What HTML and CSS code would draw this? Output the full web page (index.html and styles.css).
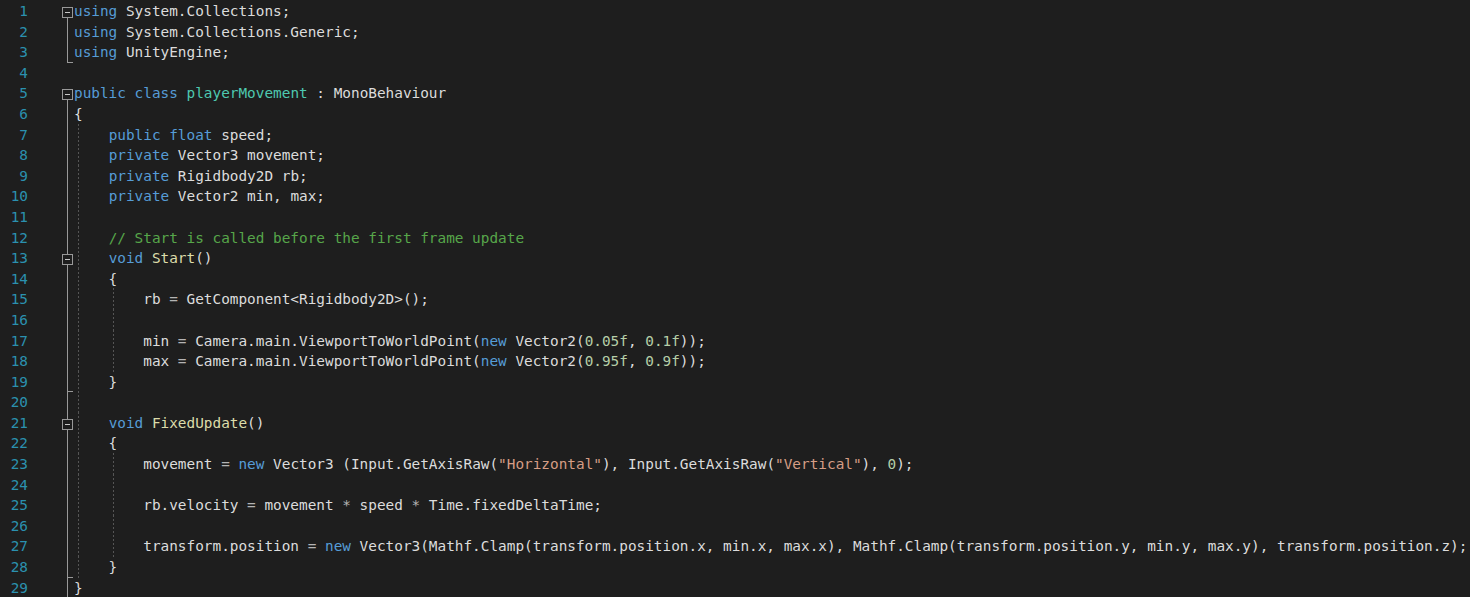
FILE: index.html
```html
<!DOCTYPE html>
<html>
<head>
<meta charset="utf-8">
<link rel="stylesheet" href="styles.css">
</head>
<body>
<div class="editor">
<div class="row"><span class="num">1</span><span class="fold vs"><span class="box"></span></span><span class="code"><span class="k">using</span> System.Collections;</span></div>
<div class="row"><span class="num">2</span><span class="fold v"></span><span class="code"><span class="k">using</span> System.Collections.Generic;</span></div>
<div class="row"><span class="num">3</span><span class="fold ve"></span><span class="code"><span class="k">using</span> UnityEngine;</span></div>
<div class="row"><span class="num">4</span><span class="fold"></span><span class="code"></span></div>
<div class="row"><span class="num">5</span><span class="fold vs"><span class="box"></span></span><span class="code"><span class="k">public</span> <span class="k">class</span> <span class="t">playerMovement</span> : MonoBehaviour</span></div>
<div class="row"><span class="num">6</span><span class="fold v"></span><span class="code">{</span></div>
<div class="row"><span class="num">7</span><span class="fold v"></span><span class="code g1">    <span class="k">public</span> <span class="k">float</span> speed;</span></div>
<div class="row"><span class="num">8</span><span class="fold v"></span><span class="code g1">    <span class="k">private</span> Vector3 movement;</span></div>
<div class="row"><span class="num">9</span><span class="fold v"></span><span class="code g1">    <span class="k">private</span> Rigidbody2D rb;</span></div>
<div class="row"><span class="num">10</span><span class="fold v"></span><span class="code g1">    <span class="k">private</span> Vector2 min, max;</span></div>
<div class="row"><span class="num">11</span><span class="fold v"></span><span class="code g1"></span></div>
<div class="row"><span class="num">12</span><span class="fold v"></span><span class="code g1">    <span class="c">// Start is called before the first frame update</span></span></div>
<div class="row"><span class="num">13</span><span class="fold v"><span class="box"></span></span><span class="code g1">    <span class="k">void</span> <span class="m">Start</span>()</span></div>
<div class="row"><span class="num">14</span><span class="fold v"></span><span class="code g1">    {</span></div>
<div class="row"><span class="num">15</span><span class="fold v"></span><span class="code g2">        rb <span class="o">=</span> GetComponent&lt;Rigidbody2D&gt;();</span></div>
<div class="row"><span class="num">16</span><span class="fold v"></span><span class="code g2"></span></div>
<div class="row"><span class="num">17</span><span class="fold v"></span><span class="code g2">        min <span class="o">=</span> Camera.main.ViewportToWorldPoint(<span class="k">new</span> Vector2(<span class="n">0.05f</span>, <span class="n">0.1f</span>));</span></div>
<div class="row"><span class="num">18</span><span class="fold v"></span><span class="code g2">        max <span class="o">=</span> Camera.main.ViewportToWorldPoint(<span class="k">new</span> Vector2(<span class="n">0.95f</span>, <span class="n">0.9f</span>));</span></div>
<div class="row"><span class="num">19</span><span class="fold ve"></span><span class="code g1">    }</span></div>
<div class="row"><span class="num">20</span><span class="fold v"></span><span class="code g1"></span></div>
<div class="row"><span class="num">21</span><span class="fold v"><span class="box"></span></span><span class="code g1">    <span class="k">void</span> <span class="m">FixedUpdate</span>()</span></div>
<div class="row"><span class="num">22</span><span class="fold v"></span><span class="code g1">    {</span></div>
<div class="row"><span class="num">23</span><span class="fold v"></span><span class="code g2">        movement <span class="o">=</span> <span class="k">new</span> Vector3 (Input.GetAxisRaw(<span class="s">"Horizontal"</span>), Input.GetAxisRaw(<span class="s">"Vertical"</span>), <span class="n">0</span>);</span></div>
<div class="row"><span class="num">24</span><span class="fold v"></span><span class="code g2"></span></div>
<div class="row"><span class="num">25</span><span class="fold v"></span><span class="code g2">        rb.velocity <span class="o">=</span> movement <span class="o">*</span> speed <span class="o">*</span> Time.fixedDeltaTime;</span></div>
<div class="row"><span class="num">26</span><span class="fold v"></span><span class="code g2"></span></div>
<div class="row"><span class="num">27</span><span class="fold v"></span><span class="code g2">        transform.position <span class="o">=</span> <span class="k">new</span> Vector3(Mathf.Clamp(transform.position.x, min.x, max.x), Mathf.Clamp(transform.position.y, min.y, max.y), transform.position.z);</span></div>
<div class="row"><span class="num">28</span><span class="fold ve"></span><span class="code g1">    }</span></div>
<div class="row"><span class="num">29</span><span class="fold v"></span><span class="code">}</span></div>
</div>
</body>
</html>
```

FILE: styles.css
```css
html, body {
  margin: 0;
  padding: 0;
  background: #1e1e1e;
}
body {
  font-family: "DejaVu Sans Mono", "Liberation Mono", monospace;
  font-size: 14.38px;
  color: #dcdcdc;
  overflow: hidden;
}
.editor {
  display: flex;
  flex-direction: column;
}
.row {
  display: grid;
  grid-template-columns: 28px 46px 1fr;
  height: 20.6px;
  line-height: 20.6px;
}
.num {
  text-align: right;
  color: #2b91af;
  padding-top: 1px;
}
.fold {
  display: flex;
  align-items: flex-start;
}
.fold.v {
  background: linear-gradient(#999, #999) 39px 0 / 1px 100% no-repeat;
}
.fold.vs {
  background: linear-gradient(#999, #999) 39px 18px / 1px calc(100% - 18px) no-repeat;
}
.fold.ve {
  background:
    linear-gradient(#999, #999) 39px 0 / 1px 100% no-repeat,
    linear-gradient(#999, #999) 39px 100% / 6px 1px no-repeat;
}
.box {
  display: flex;
  align-items: center;
  justify-content: center;
  box-sizing: border-box;
  width: 11px;
  height: 11px;
  margin-left: 34px;
  margin-top: 7px;
  border: 1px solid #999;
  background: #1e1e1e;
}
.box::after {
  content: "";
  width: 5px;
  height: 1px;
  background: #c8c8c8;
}
.code {
  white-space: pre;
  padding-top: 1px;
}
.g1 {
  background: repeating-linear-gradient(to bottom, #555 0 2px, transparent 2px 4px) 4px 0 / 1px 100% no-repeat;
}
.g2 {
  background:
    repeating-linear-gradient(to bottom, #555 0 2px, transparent 2px 4px) 4px 0 / 1px 100% no-repeat,
    repeating-linear-gradient(to bottom, #555 0 2px, transparent 2px 4px) 39px 0 / 1px 100% no-repeat;
}
.k { color: #569cd6; }
.t { color: #4ec9b0; }
.m { color: #dcdcaa; }
.c { color: #57a64a; }
.s { color: #d69d85; }
.n { color: #b5cea8; }
.o { color: #b4b4b4; }
```
